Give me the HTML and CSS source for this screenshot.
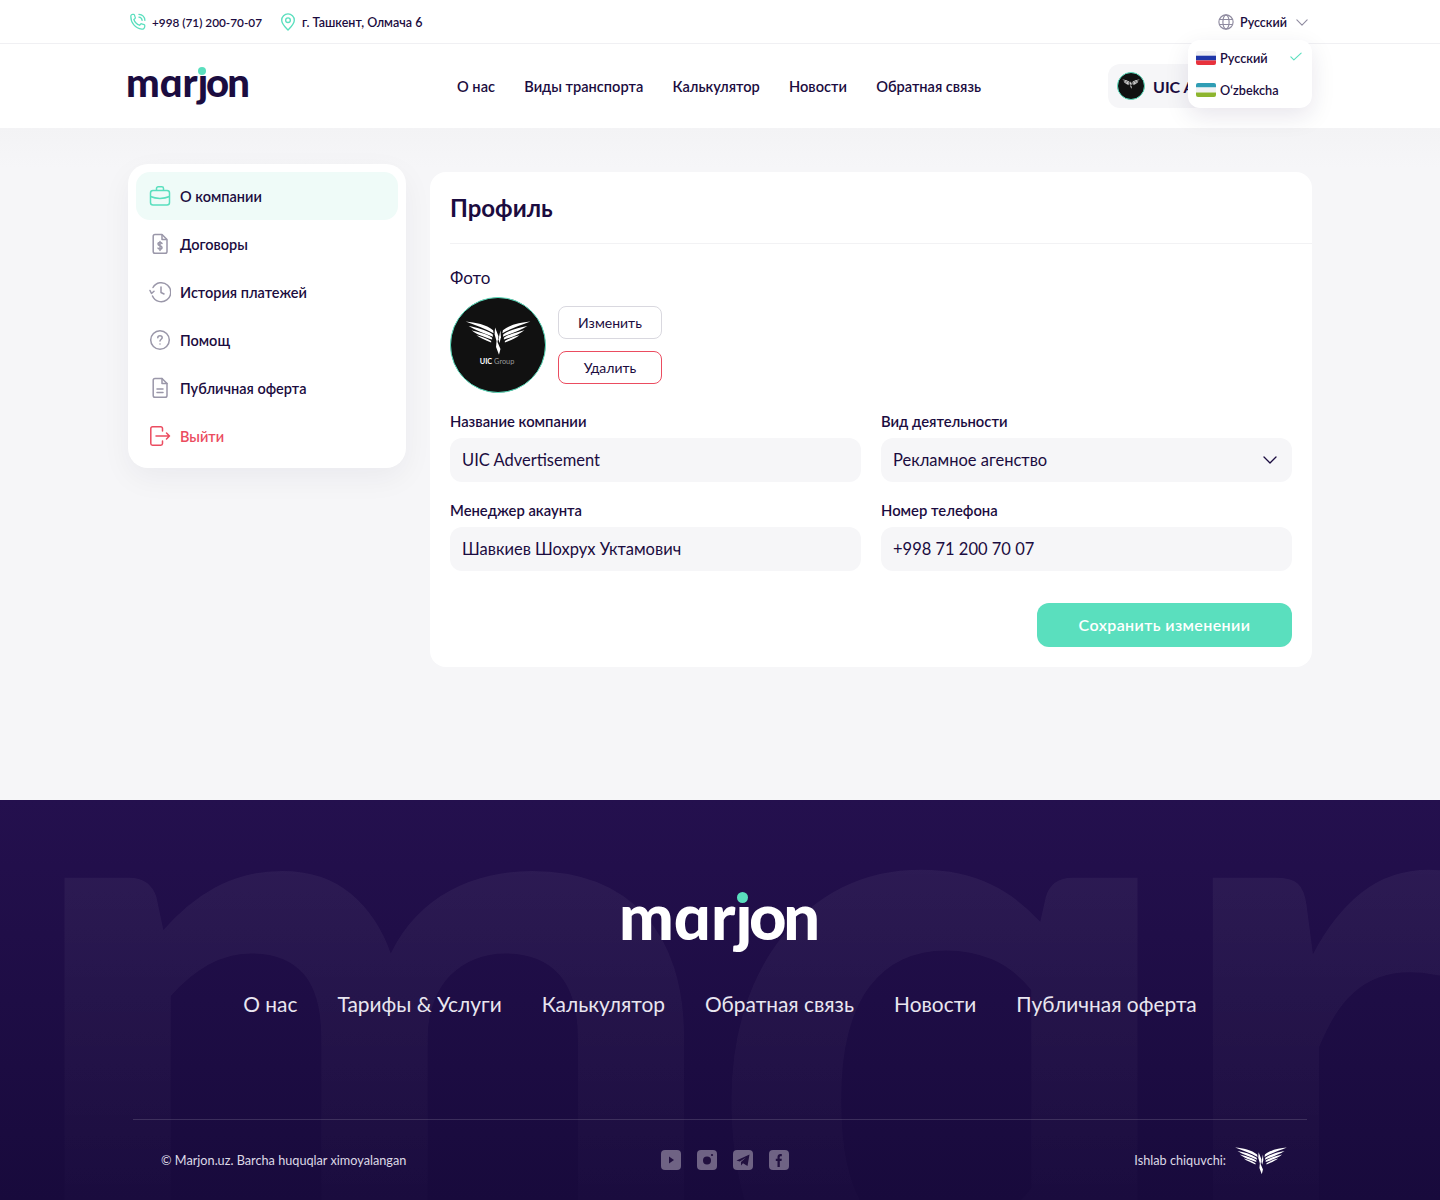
FILE: index.html
```html
<!DOCTYPE html>
<html lang="ru">
<head>
<meta charset="utf-8">
<title>Marjon</title>
<link rel="stylesheet" href="styles.css">
</head>
<body>
<header class="site-header">
  <div class="topbar">
    <div class="wrap topbar-in">
      <div class="contact phone">
        <svg class="ic-18" viewBox="0 0 20 20" fill="none" stroke="#5ADFBE" stroke-width="1.4" stroke-linecap="round" stroke-linejoin="round"><path d="M2 3.5C2 2.5 3 1.5 4 1.5h1.2c.4 0 .7.2.8.6l1 3c.1.4 0 .7-.3 1L5.4 7.2c.9 2.8 3.6 5.500 6.400 6.400l1.100-1.300c.3-.3.7-.4 1-.3l3 1c.4.1.6.4.6.8V15c0 1.800-1.500 3.200-3.300 3C7 17.300 2 11 2 3.500Z"/><path d="M11 4.500c2 .2 3.400 1.700 3.600 3.700M11 1.500c3.700.3 6.400 3 6.700 6.700"/></svg>
        <span>+998 (71) 200-70-07</span>
      </div>
      <div class="contact address">
        <svg class="ic-18" viewBox="0 0 20 20" fill="none" stroke="#5ADFBE" stroke-width="1.5"><path d="M10 19c-1-1.200-7-6.500-7-11a7 7 0 0 1 14 0c0 4.500-6 9.800-7 11Z" stroke-linejoin="round"/><circle cx="10" cy="8" r="2.600"/></svg>
        <span>г. Ташкент, Олмача 6</span>
      </div>
      <div class="lang">
        <svg class="globe" viewBox="0 0 18 18" fill="none" stroke="#8F8BA0" stroke-width="1.3"><circle cx="9" cy="9" r="8"/><ellipse cx="9" cy="9" rx="3.500" ry="8"/><path d="M1.600 6.200h14.800M1.600 11.800h14.800"/></svg>
        <span>Русский</span>
        <svg class="lang-chev" viewBox="0 0 14 8" fill="none" stroke="#8F8BA0" stroke-width="1.3" stroke-linecap="round" stroke-linejoin="round"><path d="M1 1l6 6 6-6"/></svg>
      </div>
    </div>
  </div>
  <div class="wrap mainbar">
    <a class="logo"><span class="logo-word"><span class="logo-lead">mɑr</span>ȷon</span><i class="logo-dot"></i></a>
    <nav class="nav">
      <a>О нас</a><a>Виды транспорта</a><a>Калькулятор</a><a>Новости</a><a>Обратная связь</a>
    </nav>
    <div class="account">
      <span class="account-ava">
        <svg viewBox="0 0 96 96"><use href="#uic-wings"/></svg>
      </span>
      <span class="account-name">UIC Advertisement</span>
    </div>
    <div class="lang-menu">
      <div class="lang-row">
        <svg class="flag" viewBox="0 0 20 14"><rect width="20" height="4.700" fill="#EFEFF3"/><rect y="4.700" width="20" height="4.700" fill="#1F36A8"/><rect y="9.400" width="20" height="4.600" fill="#E8323C"/></svg>
        <span>Русский</span>
        <svg class="check" viewBox="0 0 14 10" fill="none" stroke="#5ADFBE" stroke-width="1.3" stroke-linecap="round" stroke-linejoin="round"><path d="M1 5.500l3.500 3.500L13 1"/></svg>
      </div>
      <div class="lang-row">
        <svg class="flag" viewBox="0 0 20 14"><rect width="20" height="4.500" fill="#2F9DB4"/><rect y="4.500" width="20" height="5" fill="#F1F1F3"/><rect y="9.500" width="20" height="4.500" fill="#8DB52F"/></svg>
        <span>O‘zbekcha</span>
      </div>
    </div>
  </div>
</header>

<main class="page">
  <div class="wrap page-in">
    <aside class="side">
      <a class="side-item active">
        <svg class="ic-22" viewBox="0 0 22 22" fill="none" stroke="#5ADFBE" stroke-width="1.5" stroke-linejoin="round"><rect x="1.500" y="5.500" width="19" height="14.500" rx="2.500"/><path d="M7.500 5.500V3.500c0-1 .7-1.700 1.700-1.700h3.600c1 0 1.700.7 1.700 1.700v2M1.500 11.500c5.500 2.500 13.500 2.500 19 0"/></svg>
        <span>О компании</span>
      </a>
      <a class="side-item">
        <svg class="ic-22" viewBox="0 0 22 22" fill="none" stroke="#9A97A9" stroke-width="1.5" stroke-linejoin="round"><path d="M6 1.500h7l5 5v12c0 1-.8 1.800-1.800 1.800H6c-1 0-1.800-.8-1.800-1.800V3.300C4.200 2.300 5 1.500 6 1.500Z"/><path d="M13 1.500v5h5"/><path d="M13 10.500c-.5-.7-1.200-1-2-1-1.100 0-2 .6-2 1.600s.9 1.400 2 1.700 2 .7 2 1.700-.9 1.600-2 1.600c-.8 0-1.500-.3-2-1M11 8.500v9" stroke-linecap="round"/></svg>
        <span>Договоры</span>
      </a>
      <a class="side-item">
        <svg class="ic-22" viewBox="0 0 22 22" fill="none" stroke="#9A97A9" stroke-width="1.5" stroke-linecap="round" stroke-linejoin="round"><path d="M4 6.500A9.500 9.500 0 1 1 3.500 15"/><path d="M1 9.500l1.500 3 2.500-2.200M12 6v5.500l3 1.500"/></svg>
        <span>История платежей</span>
      </a>
      <a class="side-item">
        <svg class="ic-22" viewBox="0 0 22 22" fill="none" stroke="#9A97A9" stroke-width="1.5" stroke-linecap="round"><circle cx="11" cy="11" r="9.300"/><path d="M8.800 8.800c0-1.200 1-2 2.200-2s2.200.8 2.200 2-2.200 1.700-2.200 3.200M11 15v.1"/></svg>
        <span>Помощ</span>
      </a>
      <a class="side-item">
        <svg class="ic-22" viewBox="0 0 22 22" fill="none" stroke="#9A97A9" stroke-width="1.5" stroke-linejoin="round" stroke-linecap="round"><path d="M6 1.500h7l5 5v12c0 1-.8 1.800-1.800 1.800H6c-1 0-1.800-.8-1.800-1.800V3.300C4.200 2.300 5 1.500 6 1.500Z"/><path d="M13 1.500v5h5M8 12h6M8 15.500h6"/></svg>
        <span>Публичная оферта</span>
      </a>
      <a class="side-item danger">
        <svg class="ic-22" viewBox="0 0 22 22" fill="none" stroke="#EB4C60" stroke-width="1.5" stroke-linecap="round" stroke-linejoin="round"><path d="M13.500 6V3.500c0-1-.8-1.700-1.700-1.700H3.500c-1 0-1.700.7-1.700 1.700v15c0 1 .7 1.700 1.700 1.700h8.300c1 0 1.700-.7 1.700-1.700V16M7 11h13.500M17.500 8l3 3-3 3"/></svg>
        <span>Выйти</span>
      </a>
    </aside>

    <section class="card">
      <h1 class="card-title">Профиль</h1>
      <div class="card-body">
        <div class="photo-label">Фото</div>
        <div class="photo-row">
          <div class="avatar">
            <svg class="avatar-mark" viewBox="0 0 96 96"><use href="#uic-wings"/><text x="47" y="67.700" text-anchor="middle" class="avatar-text"><tspan class="avatar-bold">UIC</tspan> Group</text></svg>
          </div>
          <div class="photo-btns">
            <button class="btn">Изменить</button>
            <button class="btn btn-del">Удалить</button>
          </div>
        </div>
        <div class="fields">
          <label class="field"><span class="field-label">Название компании</span><span class="input">UIC Advertisement</span></label>
          <label class="field"><span class="field-label">Вид деятельности</span><span class="input select">Рекламное агенство
            <svg class="select-chev" viewBox="0 0 14 8" fill="none" stroke="#1B0C40" stroke-width="1.3" stroke-linecap="round" stroke-linejoin="round"><path d="M1 1l6 6 6-6"/></svg></span></label>
          <label class="field"><span class="field-label">Менеджер акаунта</span><span class="input">Шавкиев Шохрух Уктамович</span></label>
          <label class="field"><span class="field-label">Номер телефона</span><span class="input">+998 71 200 70 07</span></label>
        </div>
        <div class="actions"><button class="save">Сохранить изменении</button></div>
      </div>
    </section>
  </div>
</main>

<footer class="footer">
  <div class="footer-bg" aria-hidden="true">mɑrjon</div>
  <div class="footer-main">
    <a class="logo logo-lg"><span class="logo-word"><span class="logo-lead">mɑr</span>ȷon</span><i class="logo-dot"></i></a>
    <nav class="footer-nav">
      <a>О нас</a><a>Тарифы &amp; Услуги</a><a>Калькулятор</a><a>Обратная связь</a><a>Новости</a><a>Публичная оферта</a>
    </nav>
  </div>
  <div class="footer-bottom">
    <div class="copy">© Marjon.uz. Barcha huquqlar ximoyalangan</div>
    <div class="social">
      <svg viewBox="0 0 20 20"><rect width="20" height="20" rx="4" fill="#6F6384"/><path d="M8 6.500v7l5-3.500z" fill="#21103F"/></svg>
      <svg viewBox="0 0 20 20"><rect width="20" height="20" rx="4" fill="#6F6384"/><circle cx="10" cy="10.500" r="4" fill="#21103F"/><circle cx="15" cy="5" r="1.100" fill="#21103F"/></svg>
      <svg viewBox="0 0 20 20"><rect width="20" height="20" rx="4" fill="#6F6384"/><path d="M3.500 10.500L16.500 4.500 14.500 16 10 13.200 8 15.500 8 12 13 7.500 6.800 11.500z" fill="#21103F"/></svg>
      <svg viewBox="0 0 20 20"><rect width="20" height="20" rx="4" fill="#6F6384"/><path d="M8.500 17V11H6.800V8.800h1.700V7c0-2 1.200-3 2.900-3h1.400v2.200h-1c-.8 0-1.100.4-1.100 1.100v1.500h2.100L12.500 11h-1.700v6z" fill="#21103F"/></svg>
    </div>
    <div class="maker">
      <span>Ishlab chiquvchi:</span>
      <svg class="maker-mark" viewBox="15 22 66 37"><use href="#uic-wings"/></svg>
    </div>
  </div>
</footer>

<svg class="defs" aria-hidden="true">
  <defs>
    <g id="uic-wing">
      <path d="M15 24C25 25 36 27 43 33L43.500 36C35 31 25 28 15 24Z"/>
      <path d="M18 28.500C26 30 35 32 42.500 37L43 39.500C34 36 25 33 18 28.500Z"/>
      <path d="M21 33C27 35 35 36 42 40.500L42 42.500C35 40 27 38 21 33Z"/>
      <path d="M26 38C31 39 36 41 41 44L41 45.500C35 43 30 41 26 38Z"/>
    </g>
    <g id="uic-wings" fill="#fff">
      <use href="#uic-wing"/>
      <use href="#uic-wing" transform="translate(96 0) scale(-1 1)"/>
      <path d="M45 30L48.500 39L47.500 45L50.500 52L49 58L46 50L46.500 44L44.500 37Z"/>
      <path d="M50.500 33L51 40L49.500 46L48.500 42Z"/>
    </g>
  </defs>
</svg>
</body>
</html>
```
FILE: styles.css
```css
* { box-sizing: border-box; }
html, body { margin: 0; padding: 0; }
body {
  width: 1440px;
  height: 1200px;
  overflow: hidden;
  font-family: "Lato", "Noto Sans", sans-serif;
  color: #1B0C40;
  background: #F6F6F8;
}
a { color: inherit; text-decoration: none; }
.defs { position: absolute; width: 0; height: 0; }
.wrap { width: 1184px; margin: 0 auto; }
.ic-18 { width: 18px; height: 18px; flex: none; }
.ic-22 { width: 22px; height: 22px; flex: none; }

.site-header { background: #fff; height: 128px; }
.topbar { height: 44px; border-bottom: 1px solid #F0F0F3; }
.topbar-in { height: 43px; display: flex; align-items: center; gap: 17px; padding: 1px 0 0 1px; font-size: 12.5px; font-weight: 600; }
.contact { display: flex; align-items: center; gap: 5px; }
.phone span { font-size: 11.8px; }
.address { gap: 5px; }
.lang { margin-left: auto; display: flex; align-items: center; gap: 6px; padding-right: 4px; }
.globe { width: 16px; height: 16px; flex: none; }
.lang-chev { width: 12px; height: 7px; margin-left: 3px; }

.mainbar { position: relative; height: 84px; display: flex; align-items: center; }
.logo { position: relative; display: block; width: 122px; height: 48px; color: #1B0C40; flex: none; }
.logo-word { position: absolute; left: -2px; top: -10px; font-family: "Lato", sans-serif; font-weight: 900; font-size: 40px; line-height: 60px; letter-spacing: -2px; white-space: nowrap; }
.logo-lead { letter-spacing: 0; }
.logo-dot { position: absolute; left: 70px; top: 5px; width: 8px; height: 8px; border-radius: 50%; background: #5ADFBE; }

.nav { display: flex; gap: 29.3px; margin-left: 207px; font-size: 14.6px; font-weight: 600; }
.account { margin-left: auto; width: 204px; height: 44px; border-radius: 12px; background: #F6F6F8; display: flex; align-items: center; padding-left: 9px; gap: 8px; overflow: hidden; white-space: nowrap; }
.account-ava { width: 28px; height: 28px; border-radius: 50%; background: #111; border: 1px solid #5ADFBE; flex: none; display: flex; }
.account-ava svg { width: 100%; height: 100%; }
.account-name { font-size: 16px; font-weight: 700; }

.lang-menu { position: absolute; right: 0; top: -4px; width: 124px; height: 68px; background: #fff; border-radius: 12px; box-shadow: 0 8px 24px rgba(27, 12, 64, .1); padding-top: 2px; font-size: 12.7px; font-weight: 600; }
.lang-row { position: relative; height: 32px; display: flex; align-items: center; gap: 4px; padding-left: 8px; }
.flag { width: 20px; height: 14px; border-radius: 2px; flex: none; }
.check { position: absolute; right: 10px; top: 10px; width: 12px; height: 9px; }

.page { height: 672px; background: linear-gradient(#F3F3F5, #F6F6F8 40px); }
.page-in { display: flex; align-items: flex-start; gap: 24px; padding-top: 36px; }
.side { width: 278px; height: 304px; padding: 8px; background: #fff; border-radius: 20px; box-shadow: 0 10px 30px rgba(27, 12, 64, .05); flex: none; }
.side-item { height: 48px; border-radius: 14px; display: flex; align-items: center; gap: 9px; padding-left: 13px; font-size: 14.5px; font-weight: 600; }
.side-item.active { background: #EFFBF8; }
.side-item.danger { color: #EB4C60; }

.card { flex: 1; margin-top: 8px; height: 495px; background: #fff; border-radius: 16px; }
.card-title { margin: 0 0 0 20px; height: 72px; padding-top: 20px; border-bottom: 1px solid #F2F2F4; font-size: 24px; line-height: 32px; font-weight: 700; }
.card-body { padding: 24px 20px 0; }
.photo-label { font-size: 17px; line-height: 20px; }
.photo-row { display: flex; align-items: center; gap: 12px; margin-top: 9px; }
.avatar { width: 96px; height: 96px; border-radius: 50%; background: #111; border: 1px solid #5ADFBE; flex: none; }
.avatar-mark { width: 100%; height: 100%; display: block; }
.avatar-text { font-family: "Lato", sans-serif; font-size: 7.5px; fill: #9a9a9a; }
.avatar-bold { font-weight: 700; fill: #fff; }
.photo-btns { display: flex; flex-direction: column; gap: 12px; }
.btn { width: 104px; height: 33px; border-radius: 8px; border: 1px solid #D9D8DF; background: #fff; font: 400 14px "Lato", sans-serif; color: #1B0C40; padding: 0; }
.btn-del { border-color: #EB4C60; }

.fields { display: grid; grid-template-columns: 1fr 1fr; gap: 17px 20px; margin-top: 17px; }
.field { display: block; }
.field-label { display: block; font-size: 14.8px; line-height: 22px; font-weight: 600; }
.input { display: flex; align-items: center; height: 44px; margin-top: 6px; padding: 0 12px; background: #F6F6F8; border-radius: 12px; font-size: 16.5px; }
.select { justify-content: space-between; }
.select-chev { width: 14px; height: 8px; margin-right: 3px; }
.actions { display: flex; justify-content: flex-end; margin-top: 32px; }
.save { width: 255px; height: 44px; border: 0; border-radius: 12px; background: #5ADFBE; color: #fff; font: 600 16px "Lato", sans-serif; letter-spacing: .4px; padding: 0 0 2px; }

.footer { position: relative; height: 400px; overflow: hidden; background: linear-gradient(#24104E, #180A3C); color: #fff; }
.footer-bg {
  position: absolute;
  left: 12px;
  top: -244px;
  font-family: "Lato", sans-serif;
  font-weight: 700;
  font-size: 860px;
  line-height: 1;
  letter-spacing: -30px;
  white-space: nowrap;
  color: transparent;
  background: linear-gradient(rgba(255, 255, 255, .05) 35%, rgba(255, 255, 255, .012) 75%);
  -webkit-background-clip: text;
  background-clip: text;
}
.footer-main { position: relative; height: 319px; display: flex; flex-direction: column; align-items: center; padding-top: 92px; }
.logo-lg { width: 198px; height: 60px; color: #fff; }
.logo-lg .logo-word { font-size: 65px; line-height: 90px; top: -22px; left: -2px; letter-spacing: -3.3px; }
.logo-lg .logo-lead { letter-spacing: 0; }
.logo-lg .logo-dot { left: 116px; width: 11px; height: 11px; top: 0; }
.footer-nav { display: flex; gap: 40px; margin-top: 38px; font-size: 20.9px; line-height: 28px; color: #E9E6F0; }
.footer-bottom { position: relative; width: 1174px; height: 81px; margin: 0 auto; border-top: 1px solid rgba(255, 255, 255, .14); display: grid; grid-template-columns: 1fr auto 1fr; align-items: center; padding: 0 20px 0 28px; }
.copy { font-size: 12.7px; color: #DDD9E6; }
.social { display: flex; gap: 16px; margin-left: 2px; }
.social svg { width: 20px; height: 20px; }
.maker { justify-self: end; display: flex; align-items: center; gap: 9px; font-size: 12.7px; color: #DDD9E6; }
.maker-mark { width: 52px; height: 29px; }
```
